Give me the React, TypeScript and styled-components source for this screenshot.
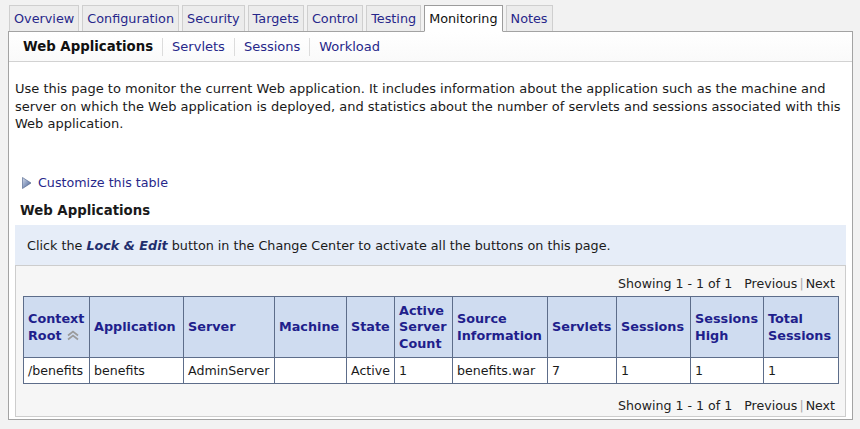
import React from 'react';
import styled, { createGlobalStyle } from 'styled-components';

const GlobalStyle = createGlobalStyle`
  html, body {
    margin: 0;
    padding: 0;
    background: #f2f2f2;
  }
  body {
    font-family: 'DejaVu Sans', Verdana, sans-serif;
    font-size: 13px;
    color: #1a1a1a;
  }
`;

const Page = styled.div`
  padding: 5px 7px 0 8px;
  width: 845px;
`;

const TabBar = styled.div`
  display: flex;
  gap: 3px;
  padding-left: 1px;
  position: relative;
  z-index: 1;
`;

const Tab = styled.div<{ $active?: boolean }>`
  height: 25px;
  line-height: 25px;
  padding: 0 4px;
  font-size: 12.8px;
  border: 1px solid ${(p) => (p.$active ? '#9c9c9c' : '#cfcfcf')};
  border-bottom: ${(p) => (p.$active ? '1px solid #fff' : 'none')};
  background: ${(p) => (p.$active ? '#fff' : '#ececec')};
  color: ${(p) => (p.$active ? '#111' : '#27278a')};
  cursor: pointer;
`;

const Panel = styled.div`
  border: 1px solid #a3a3a3;
  background: #fff;
  height: 389px;
  margin-top: -1px;
  box-sizing: border-box;
`;

const SubNav = styled.div`
  display: flex;
  align-items: center;
  height: 29px;
  padding-left: 14px;
  border-bottom: 1px solid #d2d2d2;
  background: linear-gradient(#fff, #fafafa);
`;

const SubItem = styled.span<{ $active?: boolean }>`
  font-weight: ${(p) => (p.$active ? 'bold' : 'normal')};
  font-size: ${(p) => (p.$active ? '13.3px' : '13px')};
  color: ${(p) => (p.$active ? '#111' : '#27278a')};
  padding: 0 9px;
  border-left: ${(p) => (p.$active ? 'none' : '1px solid #dcdcdc')};
  line-height: 18px;
  &:first-child {
    padding-left: 0;
  }
`;

const Body = styled.div`
  padding: 0 6px;
`;

const Description = styled.p`
  margin: 18px 0 0;
  font-size: 13px;
  line-height: 17.5px;
  white-space: nowrap;
`;

const CustomizeLink = styled.div`
  display: flex;
  align-items: center;
  gap: 6px;
  margin-top: 41px;
  padding-left: 6px;
  font-size: 12.7px;
  line-height: 18px;
  color: #27278a;
`;

const Heading = styled.div`
  margin-top: 10px;
  padding-left: 5px;
  font-weight: bold;
  font-size: 13.3px;
  line-height: 18px;
`;

const InfoBox = styled.div`
  margin-top: 5px;
  height: 40px;
  display: flex;
  align-items: center;
  padding: 1px 0 0 12px;
  box-sizing: border-box;
  font-size: 12.75px;
  background: #e6edf8;
`;

const Emph = styled.span`
  font-weight: bold;
  font-style: italic;
  color: #1f2e6e;
`;

const TableBox = styled.div`
  background: #f6f6f6;
  border: 1px solid #cdcdcd;
  padding: 9px 7px 1px;
`;

const Pager = styled.div`
  display: flex;
  justify-content: flex-end;
  align-items: center;
  padding-right: 3px;
  font-size: 12.6px;
  line-height: 18px;
  color: #222;
`;

const PagerNav = styled.span`
  margin-left: 12px;
`;

const Sep = styled.span`
  color: #aaa;
  margin: 0 2px;
`;

const Table = styled.table`
  border-collapse: collapse;
  table-layout: fixed;
  width: 815px;
  margin: 3px 0 13px;
  background: #fff;
`;

const Th = styled.th`
  background: #cfdcf0;
  border: 1px solid #5d6d8a;
  color: #1f1f8c;
  font-size: 12.8px;
  font-weight: bold;
  text-align: left;
  vertical-align: middle;
  padding: 2px 4px 0;
  height: 61px;
  line-height: 16.5px;
  box-sizing: border-box;
`;

const Td = styled.td`
  border: 1px solid #5d6d8a;
  padding: 0 4px;
  height: 25px;
  font-size: 12.6px;
  white-space: nowrap;
  overflow: hidden;
`;

const SortIcon = styled.svg`
  vertical-align: middle;
  margin-left: 4px;
  position: relative;
  top: -1px;
`;

const tabs = ['Overview', 'Configuration', 'Security', 'Targets', 'Control', 'Testing', 'Monitoring', 'Notes'];
const subTabs = ['Web Applications', 'Servlets', 'Sessions', 'Workload'];

const columns: { label: React.ReactNode; width: number }[] = [
  { label: <>Context<br />Root</>, width: 66 },
  { label: 'Application', width: 94 },
  { label: 'Server', width: 91 },
  { label: 'Machine', width: 72 },
  { label: 'State', width: 48 },
  { label: <>Active<br />Server<br />Count</>, width: 58 },
  { label: <>Source<br />Information</>, width: 95 },
  { label: 'Servlets', width: 69 },
  { label: 'Sessions', width: 74 },
  { label: <>Sessions<br />High</>, width: 73 },
  { label: <>Total<br />Sessions</>, width: 75 },
];

const row = ['/benefits', 'benefits', 'AdminServer', '', 'Active', '1', 'benefits.war', '7', '1', '1', '1'];

function TriangleIcon() {
  return (
    <svg width="11" height="12" viewBox="0 0 11 12">
      <defs>
        <linearGradient id="tri" x1="0" y1="0" x2="1" y2="1">
          <stop offset="0" stopColor="#d4dcea" />
          <stop offset="0.5" stopColor="#8a9cc0" />
          <stop offset="1" stopColor="#3f5583" />
        </linearGradient>
      </defs>
      <polygon points="1.5,0.5 10,6 1.5,11.5" fill="url(#tri)" stroke="#5a6d93" strokeWidth="0.7" />
    </svg>
  );
}

function Pagination() {
  return (
    <Pager>
      Showing 1 - 1 of 1
      <PagerNav>
        Previous<Sep>|</Sep>Next
      </PagerNav>
    </Pager>
  );
}

export default function App() {
  return (
    <Page>
      <GlobalStyle />
      <TabBar>
        {tabs.map((t) => (
          <Tab key={t} $active={t === 'Monitoring'}>
            {t}
          </Tab>
        ))}
      </TabBar>
      <Panel>
        <SubNav>
          {subTabs.map((s, i) => (
            <SubItem key={s} $active={i === 0}>
              {s}
            </SubItem>
          ))}
        </SubNav>
        <Body>
          <Description>
            Use this page to monitor the current Web application. It includes information about the application such as the machine and
            <br />
            server on which the Web application is deployed, and statistics about the number of servlets and sessions associated with this
            <br />
            Web application.
          </Description>
          <CustomizeLink>
            <TriangleIcon />
            Customize this table
          </CustomizeLink>
          <Heading>Web Applications</Heading>
          <InfoBox>
            <span>
              Click the <Emph>Lock &amp; Edit</Emph> button in the Change Center to activate all the buttons on this page.
            </span>
          </InfoBox>
          <TableBox>
            <Pagination />
            <Table>
              <colgroup>
                {columns.map((c, i) => (
                  <col key={i} style={{ width: c.width }} />
                ))}
              </colgroup>
              <thead>
                <tr>
                  {columns.map((c, i) => (
                    <Th key={i}>
                      {c.label}
                      {i === 0 && (
                        <SortIcon width="14" height="11" viewBox="0 0 14 11">
                          <polyline points="2,5.5 7,1.5 12,5.5" fill="none" stroke="#9a9a9a" strokeWidth="1.7" />
                          <polyline points="2,9.5 7,5.5 12,9.5" fill="none" stroke="#9a9a9a" strokeWidth="1.7" />
                        </SortIcon>
                      )}
                    </Th>
                  ))}
                </tr>
              </thead>
              <tbody>
                <tr>
                  {row.map((v, i) => (
                    <Td key={i}>{v}</Td>
                  ))}
                </tr>
              </tbody>
            </Table>
            <Pagination />
          </TableBox>
        </Body>
      </Panel>
    </Page>
  );
}
